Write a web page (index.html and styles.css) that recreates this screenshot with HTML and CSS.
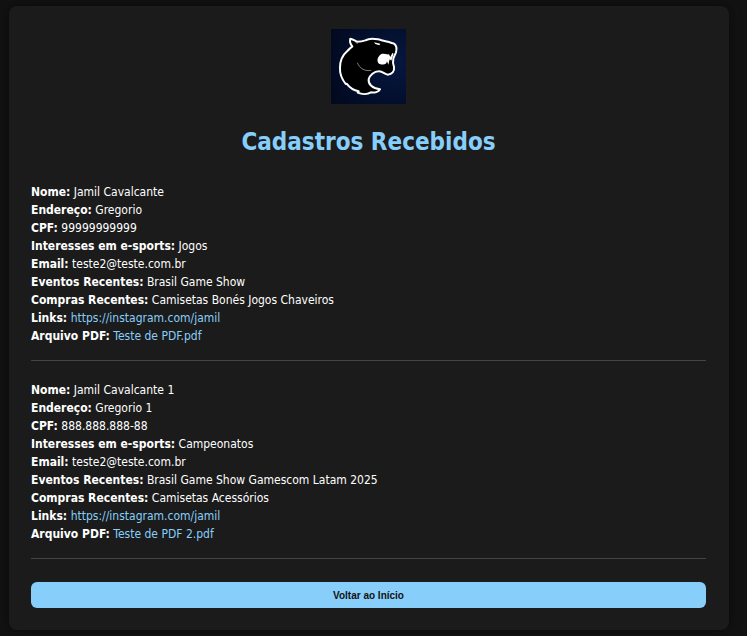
FILE: index.html
```html
<!DOCTYPE html>
<html lang="pt-BR">
<head>
  <meta charset="utf-8">
  <meta name="viewport" content="width=device-width, initial-scale=1">
  <title>Cadastros Recebidos</title>
  <link rel="stylesheet" href="styles.css">
</head>
<body>
  <main class="card">
    <svg class="logo" viewBox="33 27 225 225" role="img" aria-label="Logo">
      <defs>
        <radialGradient id="glow" cx="0.85" cy="0.45" r="0.9">
          <stop offset="0" stop-color="#06173f"/>
          <stop offset="0.55" stop-color="#030f2e"/>
          <stop offset="1" stop-color="#020a20"/>
        </radialGradient>
      </defs>
      <rect x="33" y="27" width="225" height="225" fill="url(#glow)"/>
      <path d="M91 56 C97 56 104 62 111 65 C120 65 128 64 136 61 C145 56 159 55 173 58 C190 62 207 65 222 71 C230 77 231 86 228 97 L220 115 C218 125 219 133 222 141 C224 154 216 163 203 164 C193 161 186 153 176 154 C163 154 149 165 146 178 C144 192 157 206 180 208 C176 216 163 219 153 217 C143 223 126 224 113 218 L116 214 C101 211 88 202 80 191 L77 192 C66 178 59 159 60 143 C60 123 68 105 82 93 C88 87 93 82 97 79 C91 72 89 62 91 56 Z" fill="#000" stroke="#fff" stroke-width="6" stroke-linejoin="round"/>
      <path d="M183 103 C190 99 198 104 207 103 L211 111 L217 99 L221 101 L214 122 L209 118 L205 134 L201 124 C199 134 191 136 177 131 C169 125 172 110 183 103 Z" fill="#fff"/>
      <path d="M162 67 L181 71 L178 76 L166 72 Z" fill="#fff"/>
      <path d="M112 128 C119 146 136 155 154 151 M106 66 L113 71" fill="none" stroke="#bbb" stroke-width="2"/>
    </svg>
    <h1 class="title">Cadastros Recebidos</h1>

    <section class="record">
      <p><strong>Nome:</strong> Jamil Cavalcante</p>
      <p><strong>Endereço:</strong> Gregorio</p>
      <p><strong>CPF:</strong> 99999999999</p>
      <p><strong>Interesses em e-sports:</strong> Jogos</p>
      <p><strong>Email:</strong> teste2@teste.com.br</p>
      <p><strong>Eventos Recentes:</strong> Brasil Game Show</p>
      <p><strong>Compras Recentes:</strong> Camisetas Bonés Jogos Chaveiros</p>
      <p><strong>Links:</strong> <a href="https://instagram.com/jamil">https://instagram.com/jamil</a></p>
      <p><strong>Arquivo PDF:</strong> <a href="#">Teste de PDF.pdf</a></p>
    </section>
    <hr class="divider">
    <section class="record">
      <p><strong>Nome:</strong> Jamil Cavalcante 1</p>
      <p><strong>Endereço:</strong> Gregorio 1</p>
      <p><strong>CPF:</strong> 888.888.888-88</p>
      <p><strong>Interesses em e-sports:</strong> Campeonatos</p>
      <p><strong>Email:</strong> teste2@teste.com.br</p>
      <p><strong>Eventos Recentes:</strong> Brasil Game Show Gamescom Latam 2025</p>
      <p><strong>Compras Recentes:</strong> Camisetas Acessórios</p>
      <p><strong>Links:</strong> <a href="https://instagram.com/jamil">https://instagram.com/jamil</a></p>
      <p><strong>Arquivo PDF:</strong> <a href="#">Teste de PDF 2.pdf</a></p>
    </section>
    <hr class="divider">
    <button class="back" type="button">Voltar ao Início</button>
  </main>
</body>
</html>
```
FILE: styles.css
```css
* {
  box-sizing: border-box;
}

body {
  margin: 0;
  padding: 6px 18px 6px 9px;
  background: #121212;
  color: #fff;
  font-family: Tahoma, "DejaVu Sans Condensed", "Noto Sans", sans-serif;
  font-size: 12px;
  line-height: 18px;
}

.card {
  display: flex;
  flex-direction: column;
  padding: 23px 23px 22px 22px;
  border-radius: 8px;
  background: #1b1b1b;
  box-shadow: 0 0 12px rgba(0, 0, 0, 0.5);
}

.logo {
  align-self: center;
  width: 75px;
  height: 75px;
}

.title {
  margin: 22px 0 25px;
  color: #87cefa;
  font-size: 24px;
  line-height: 32px;
  text-align: center;
}

.record p {
  margin: 0;
}

.record a {
  color: #87cefa;
  text-decoration: none;
}

.divider {
  width: 100%;
  height: 1px;
  margin: 15px 0 20px;
  border: 0;
  background: #444;
}

.back {
  height: 26px;
  margin-top: 3px;
  border: 0;
  border-radius: 6px;
  background: #87cefa;
  color: #121212;
  font: bold 10px "Liberation Sans", Arial, sans-serif;
  cursor: pointer;
}
```
